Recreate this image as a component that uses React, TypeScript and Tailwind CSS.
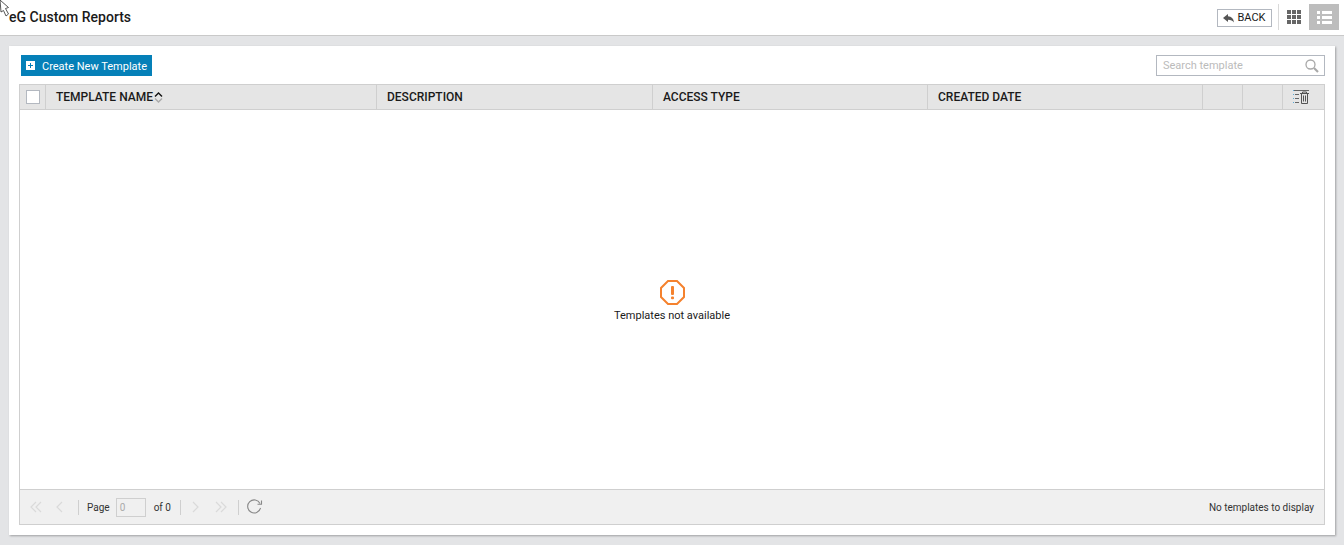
const font = { fontFamily: 'Roboto, sans-serif' }

function Cursor() {
  return (
    <svg className="absolute left-0 top-0" width="12" height="18" viewBox="0 0 12 18">
      <path d="M0 0 L8.5 7.5 L5.5 8.5 L8.5 14 L6 16 L3.5 10.5 L1 12 Z" fill="#fff" stroke="#444" strokeWidth="0.9" />
    </svg>
  )
}

function GridIcon() {
  return (
    <svg width="14" height="14" viewBox="0 0 14 14" fill="#666">
      <rect x="0" y="0" width="4" height="4" />
      <rect x="5" y="0" width="4" height="4" />
      <rect x="10" y="0" width="4" height="4" />
      <rect x="0" y="5" width="4" height="4" />
      <rect x="5" y="5" width="4" height="4" />
      <rect x="10" y="5" width="4" height="4" />
      <rect x="0" y="10" width="4" height="4" />
      <rect x="5" y="10" width="4" height="4" />
      <rect x="10" y="10" width="4" height="4" />
    </svg>
  )
}

function ListIcon() {
  return (
    <svg width="15" height="13" viewBox="0 0 15 13" fill="#fff">
      <rect x="0" y="0" width="3" height="3" />
      <rect x="5" y="0" width="10" height="3" />
      <rect x="0" y="5" width="3" height="3" />
      <rect x="5" y="5" width="10" height="3" />
      <rect x="0" y="10" width="3" height="3" />
      <rect x="5" y="10" width="10" height="3" />
    </svg>
  )
}

function BackArrow() {
  return (
    <svg width="11" height="9" viewBox="0 0 11 9" fill="#555">
      <path d="M0 4 L5 0 V2.3 C8.5 2.5 10.5 4.5 11 8.5 C9.5 6.5 8 5.7 5 5.7 V8 Z" />
    </svg>
  )
}

function SearchIcon() {
  return (
    <svg width="14" height="14" viewBox="0 0 14 14" fill="none" stroke="#a8a8a8">
      <circle cx="5.5" cy="5.5" r="4.5" strokeWidth="1.3" />
      <path d="M9 9 L13 13" strokeWidth="2.2" />
    </svg>
  )
}

function DeleteAllIcon() {
  return (
    <svg width="16" height="14" viewBox="0 0 16 14" fill="none">
      <path d="M1 0.5H16" stroke="#666" />
      <path d="M0 0.5H1M0 4.5H1M0 8.5H1M0 12.5H1" stroke="#5aa9d6" />
      <path d="M2 4.5H6M2 8.5H6M2 12.5H6" stroke="#666" />
      <path d="M7 3.5H16M9.5 3.5V2H13.5V3.5" stroke="#555" />
      <path d="M8.5 3.5V13.5H14.5V3.5M10.5 5.5V11.5M12.5 5.5V11.5" stroke="#555" />
    </svg>
  )
}

function PagerChevron({ dir, double }: { dir: 'left' | 'right'; double?: boolean }) {
  const d = dir === 'left' ? 'M6 1 L1 6 L6 11' : 'M1 1 L6 6 L1 11'
  return (
    <svg width={double ? 13 : 8} height="12" viewBox={double ? '0 0 13 12' : '0 0 8 12'} fill="none" stroke="#dadada" strokeWidth="1.2">
      <path d={d} />
      {double && <path d={d} transform="translate(5 0)" />}
    </svg>
  )
}

function Sep() {
  return <div className="h-[15px] w-px bg-[#cfcfcf]" />
}

export default function App() {
  return (
    <div className="relative flex h-[545px] w-full flex-col overflow-hidden bg-[#e3e4e6]" style={font}>
      <Cursor />

      {/* header */}
      <div className="flex h-9 shrink-0 items-center justify-between border-b border-[#c9c9c9] bg-white pb-px pl-[9px] pr-[5px]">
        <h1 className="text-sm font-medium text-[#1a1a1a]">eG Custom Reports</h1>
        <div className="flex items-center">
          <button className="mt-[2px] flex h-[18px] w-[55px] items-center justify-center gap-[3px] border border-[#b3b8c0] text-[11px] text-[#1a1a1a]">
            <BackArrow />
            BACK
          </button>
          <div className="ml-[6px] h-[26px] w-px bg-[#d9d9d9]" />
          <div className="flex h-[26px] w-[30px] items-center justify-center">
            <GridIcon />
          </div>
          <div className="flex h-[26px] w-[30px] items-center justify-center bg-[#bdbdbd]">
            <ListIcon />
          </div>
        </div>
      </div>

      {/* card */}
      <div className="mx-[9px] mb-[10px] mt-[10px] flex min-h-0 flex-1 flex-col bg-white px-[10px] pb-[10px] pt-[9px] shadow-[1px_1px_2px_rgba(0,0,0,0.3)]">
        <div className="mb-2 flex h-[21px] shrink-0 items-center justify-between">
          <button className="ml-[2px] flex h-[21px] w-[131px] items-center gap-[7px] bg-[#0580b8] pl-[5px] text-[11px] text-white">
            <span className="flex h-[9px] w-[9px] items-center justify-center bg-white">
              <svg width="7" height="7" viewBox="0 0 7 7" fill="#0580b8">
                <path d="M3 1H4V3H6V4H4V6H3V4H1V3H3Z" />
              </svg>
            </span>
            <span className="pt-[3px]">Create New Template</span>
          </button>
          <div className="flex h-[21px] w-[169px] items-center justify-between border border-[#b3b8c0] pl-[6px] pr-[5px] text-[11px] text-[#bbb]">
            <span className="pt-[2px]">Search template</span>
            <SearchIcon />
          </div>
        </div>

        {/* table */}
        <div className="flex min-h-0 flex-1 flex-col border border-[#cfcfcf]">
          <div className="flex h-[25px] shrink-0 border-b border-[#cfcfcf] bg-[#e5e5e5] text-xs font-medium text-[#1a1a1a]">
            <div className="flex w-[26px] items-center justify-center border-r border-[#cfcfcf]">
              <div className="h-[14px] w-[14px] border border-[#b3b8c0] bg-white" />
            </div>
            <div className="flex w-[331px] items-center border-r border-[#cfcfcf] pl-[10px]">
              TEMPLATE NAME
              <svg className="ml-px" width="9" height="11" viewBox="0 0 9 11" fill="none">
                <path d="M1 4.5 L4.5 1 L8 4.5" stroke="#111" strokeWidth="1.4" />
                <path d="M1 6.5 L4.5 10 L8 6.5" stroke="#aaa" strokeWidth="1.4" />
              </svg>
            </div>
            <div className="flex w-[276px] items-center border-r border-[#cfcfcf] pl-[10px]">DESCRIPTION</div>
            <div className="flex w-[275px] items-center border-r border-[#cfcfcf] pl-[10px]">ACCESS TYPE</div>
            <div className="flex w-[275px] items-center border-r border-[#cfcfcf] pl-[10px]">CREATED DATE</div>
            <div className="w-10 border-r border-[#cfcfcf]" />
            <div className="w-10 border-r border-[#cfcfcf]" />
            <div className="flex flex-1 items-center justify-center pr-[6px]">
              <DeleteAllIcon />
            </div>
          </div>

          <div className="flex min-h-0 flex-1 flex-col items-center justify-center pt-[6px]">
            <svg width="25" height="25" viewBox="0 0 25 25" fill="none">
              <path d="M8 1H17L24 8V17L17 24H8L1 17V8Z" stroke="#f5822e" strokeWidth="2" />
              <rect x="11" y="6" width="3" height="9" rx="1" fill="#f5822e" />
              <rect x="11" y="16.5" width="3" height="2.8" rx="1" fill="#f5822e" />
            </svg>
            <p className="mt-[3px] text-[11px] text-[#1a1a1a]">Templates not available</p>
          </div>

          <div className="flex h-[35px] shrink-0 items-center justify-between border-t border-[#cfcfcf] bg-[#f0f0f0] pl-[10px] pr-[10px] text-[10px] text-[#333]">
            <div className="flex items-center">
              <PagerChevron dir="left" double />
              <div className="ml-[13px]">
                <PagerChevron dir="left" />
              </div>
              <div className="ml-[14px]">
                <Sep />
              </div>
              <span className="ml-2">Page</span>
              <div className="ml-[6px] flex h-[19px] w-[30px] items-center border border-[#cfcfcf] pl-[3px] text-[#aaa]">0</div>
              <span className="ml-2">of 0</span>
              <div className="ml-[9px]">
                <Sep />
              </div>
              <div className="ml-[11px]">
                <PagerChevron dir="right" />
              </div>
              <div className="ml-[15px]">
                <PagerChevron dir="right" double />
              </div>
              <div className="ml-[10px]">
                <Sep />
              </div>
              <svg className="ml-[7px]" width="17" height="16" viewBox="0 0 17 16" fill="none" stroke="#888" strokeWidth="1.1">
                <path d="M14 4.5A6.5 6.5 0 1 0 14.5 9" />
                <path d="M15.5 1.5V5.2H11.5" />
              </svg>
            </div>
            <span>No templates to display</span>
          </div>
        </div>
      </div>
    </div>
  )
}
